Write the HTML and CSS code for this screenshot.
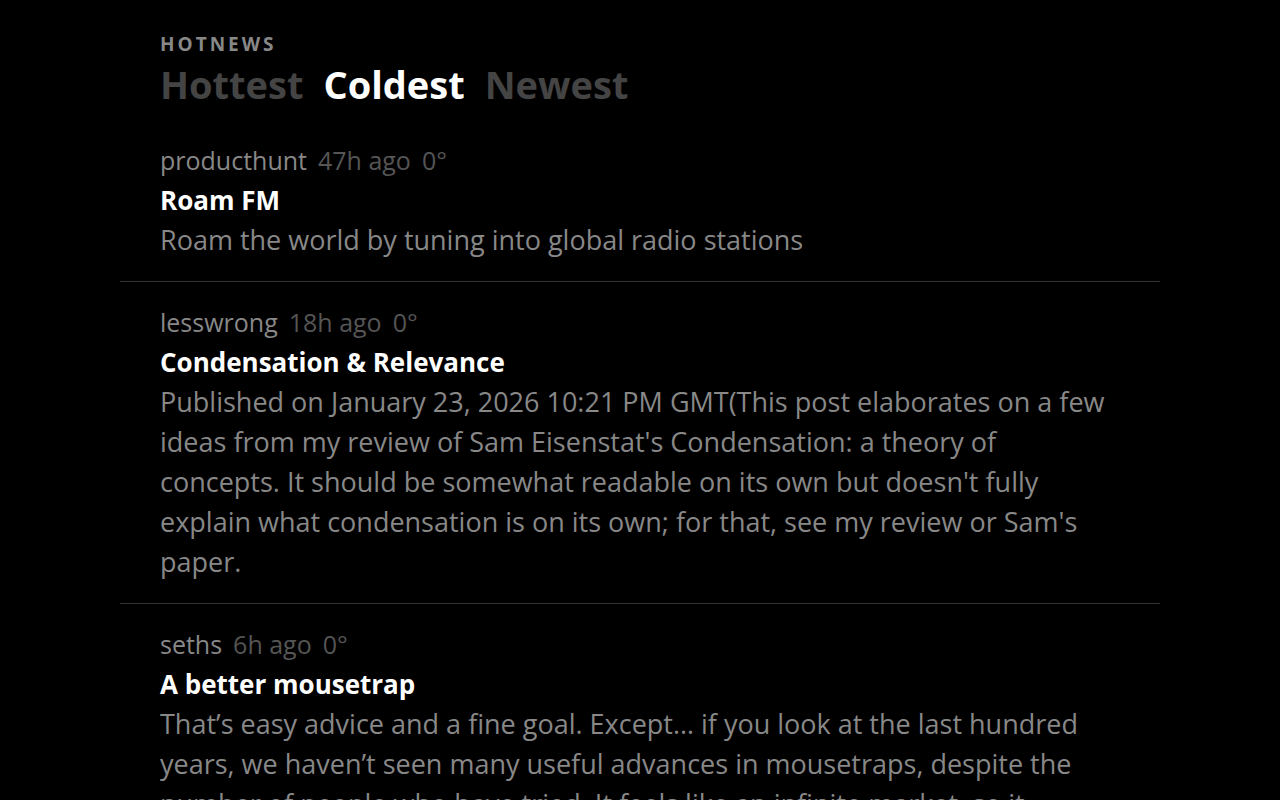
FILE: index.html
```html
<!DOCTYPE html>
<html lang="en">
<head>
    <meta charset="UTF-8">
    <meta name="viewport" content="width=device-width, initial-scale=1.0">
    <title>HotNews</title>
    <link rel="stylesheet" href="styles.css">
</head>
<body>
    <div class="page">

        <!-- header + sort tabs -->
        <header class="top">
            <div class="brand">HOTNEWS</div>
            <nav class="tabs">
                <a class="tab">Hottest</a>
                <a class="tab active">Coldest</a>
                <a class="tab">Newest</a>
            </nav>
        </header>

        <!-- feed -->
        <div class="item">
            <div class="meta">
                <span class="source">producthunt</span>
                <span class="age">47h ago</span>
                <span class="temp">0°</span>
            </div>
            <div class="title">Roam FM</div>
            <p class="desc">Roam the world by tuning into global radio stations</p>
        </div>

        <div class="item">
            <div class="meta">
                <span class="source">lesswrong</span>
                <span class="age">18h ago</span>
                <span class="temp">0°</span>
            </div>
            <div class="title">Condensation &amp; Relevance</div>
            <p class="desc">Published on January 23, 2026 10:21 PM GMT(This post elaborates on a few ideas from my review of Sam Eisenstat's Condensation: a theory of concepts. It should be somewhat readable on its own but doesn't fully explain what condensation is on its own; for that, see my review or Sam's paper.</p>
        </div>

        <div class="item">
            <div class="meta">
                <span class="source">seths</span>
                <span class="age">6h ago</span>
                <span class="temp">0°</span>
            </div>
            <div class="title">A better mousetrap</div>
            <p class="desc">That’s easy advice and a fine goal. Except… if you look at the last hundred years, we haven’t seen many useful advances in mousetraps, despite the number of people who have tried. It feels like an infinite market, so it seems like there should be room for one more good idea.</p>
        </div>

    </div>
</body>
</html>
```

FILE: styles.css
```css
/* base */
body {
    margin: 0;
    background: #000;
    color: #fff;
    font-family: "Open Sans", Lato, sans-serif;
}
.page {
    width: 1040px;
    margin: 0 auto;
}
/* header */
.top {
    padding: 32px 40px 12px;
}
.brand {
    font-size: 19px;
    line-height: 24px;
    font-weight: 700;
    letter-spacing: 3px;
    color: #888;
}
.tabs {
    display: flex;
    gap: 20px;
    margin-top: 4px;
}
.tab {
    font-size: 38px;
    line-height: 48px;
    font-weight: 700;
    color: #444;
    cursor: pointer;
}
.tab.active {
    color: #fff;
}
/* feed items */
.item {
    padding: 20px 40px 21px;
    border-bottom: 1px solid #333;
}
.meta {
    display: flex;
    gap: 11px;
    font-size: 25px;
    line-height: 40px;
    color: #555;
}
.source {
    color: #888;
}
.title {
    font-size: 26px;
    line-height: 40px;
    font-weight: 700;
}
.desc {
    margin: 0;
    padding-right: 10px;
    font-size: 27px;
    line-height: 40px;
    color: #888;
}
```
